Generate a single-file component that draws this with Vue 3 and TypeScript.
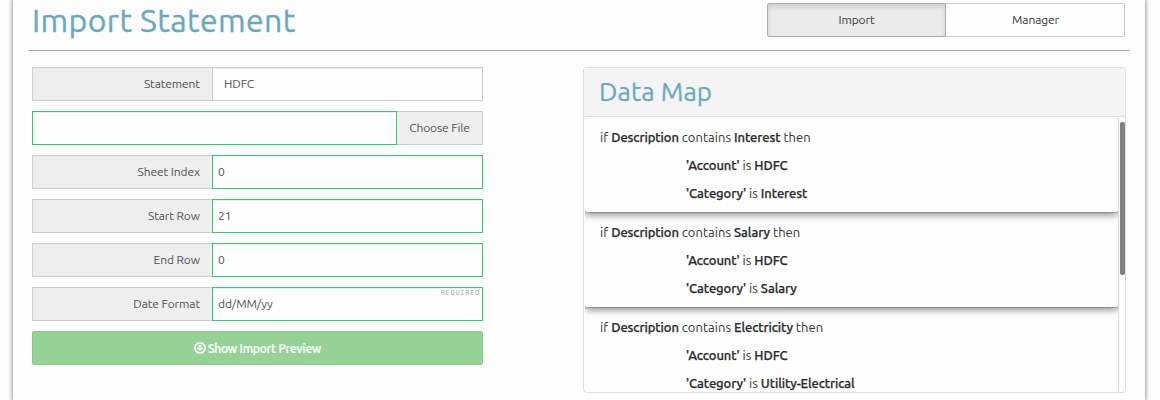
<script setup lang="ts">
interface Rule {
  value: string
  account: string
  category: string
}

const fields = [
  { label: 'Sheet Index', value: '0', required: false },
  { label: 'Start Row', value: '21', required: false },
  { label: 'End Row', value: '0', required: false },
  { label: 'Date Format', value: 'dd/MM/yy', required: true },
]

const rules: Rule[] = [
  { value: 'Interest', account: 'HDFC', category: 'Interest' },
  { value: 'Salary', account: 'HDFC', category: 'Salary' },
  { value: 'Electricity', account: 'HDFC', category: 'Utility-Electrical' },
]
</script>

<template>
  <main class="page">
    <header class="head">
      <h1>Import Statement</h1>
      <nav class="tabs">
        <button class="tab active">Import</button>
        <button class="tab">Manager</button>
      </nav>
    </header>
    <div class="columns">
      <form class="form" @submit.prevent>
        <div class="row">
          <span class="addon label">Statement</span>
          <span class="control plain">HDFC</span>
        </div>
        <div class="row">
          <span class="control valid"></span>
          <span class="addon choose">Choose File</span>
        </div>
        <div v-for="f in fields" :key="f.label" class="row">
          <span class="addon label">{{ f.label }}</span>
          <span class="control valid">
            <span>{{ f.value }}</span>
            <span v-if="f.required" class="required">REQUIRED</span>
          </span>
        </div>
        <button class="submit">
          <svg width="12" height="12" viewBox="0 0 12 12">
            <circle cx="6" cy="6" r="5.1" fill="none" stroke="#fff" stroke-width="1.8" />
            <path d="M4.8 2.7h2.4v3h2.1L6 9.2 2.7 5.7h2.1z" fill="#fff" />
          </svg>
          <span>Show Import Preview</span>
        </button>
      </form>
      <section class="panel">
        <h2>Data Map</h2>
        <div class="body">
          <div class="list">
            <article v-for="r in rules" :key="r.value" class="card">
              <p>if <b>Description</b> contains <b>{{ r.value }}</b> then</p>
              <p class="sub"><b>'Account'</b> is <b>{{ r.account }}</b></p>
              <p class="sub"><b>'Category'</b> is <b>{{ r.category }}</b></p>
            </article>
          </div>
          <div class="track"><div class="thumb"></div></div>
        </div>
      </section>
    </div>
  </main>
</template>

<style>
body {
  background: #fdfdfd;
}
</style>

<style scoped>
* {
  box-sizing: border-box;
}
.page {
  width: 1132px;
  height: 400px;
  margin-left: 13px;
  padding: 0 15px;
  background: #fdfdfd;
  box-shadow: 0 0 4px 1px #999;
  clip-path: inset(0 -10px);
  font-family: Ubuntu, "Noto Sans", sans-serif;
  font-size: 12px;
  letter-spacing: -0.1px;
  color: #505050;
}
.head {
  height: 51px;
  display: flex;
  justify-content: space-between;
  border-bottom: 1px solid #aaa;
  padding: 3px 5px 0 4px;
}
h1,
h2,
p {
  margin: 0;
  font-weight: 400;
}
h1 {
  font-size: 32px;
  line-height: 34px;
  letter-spacing: 0.4px;
  color: #69a9c0;
  -webkit-text-stroke: 0.35px #69a9c0;
  white-space: nowrap;
}
.tabs {
  display: flex;
}
button {
  font: inherit;
  letter-spacing: inherit;
  padding: 0;
}
.tab {
  width: 179px;
  height: 34px;
  padding-bottom: 1px;
  padding-left: 1px;
  border: 1px solid #ccc;
  border-left: 0;
  border-radius: 0 2px 2px 0;
  background: #fefefe;
  color: #333;
}
.tab.active {
  padding-left: 0;
  border: 1px solid #adadad;
  border-radius: 2px 0 0 2px;
  background: #ebebeb;
  box-shadow: inset 0 3px 5px rgba(0, 0, 0, 0.125);
}
.columns {
  display: flex;
  justify-content: space-between;
  padding: 16px 4px 0;
}
.form {
  width: 451px;
  display: flex;
  flex-direction: column;
  gap: 10px;
}
.row {
  display: flex;
  height: 34px;
}
.addon {
  background: #eee;
  border: 1px solid #ccc;
  line-height: 32px;
}
.label {
  width: 180px;
  border-right: 0;
  padding-right: 12px;
  text-align: right;
}
.choose {
  width: 86px;
  border-left: 0;
  text-align: center;
}
.control {
  flex: 1;
  position: relative;
  border: 1px solid #ccc;
  padding-left: 5px;
  line-height: 32px;
  background: #fefefe;
  box-shadow: inset 0 1px 1px rgba(0, 0, 0, 0.075);
}
.plain {
  padding-left: 11px;
}
.valid {
  border-color: #2ecc71;
}
.required {
  position: absolute;
  top: 1px;
  right: 2px;
  font: 7px/9px "DejaVu Sans Mono", monospace;
  letter-spacing: 0.7px;
  color: #aaa;
}
.submit {
  height: 34px;
  display: flex;
  align-items: center;
  justify-content: center;
  gap: 2px;
  border: 1px solid #89cb89;
  border-radius: 2px;
  background: #96d296;
  color: #fff;
  font-weight: 500;
  letter-spacing: -0.2px;
  -webkit-text-stroke: 0.2px #fff;
}
.panel {
  width: 543px;
  height: 326px;
  border: 1px solid #ddd;
  border-radius: 4px;
  overflow: hidden;
}
h2 {
  height: 49px;
  padding-left: 15px;
  background: #f4f4f4;
  border-bottom: 1px solid #ddd;
  font-size: 26px;
  line-height: 48px;
  letter-spacing: 0.1px;
  color: #69a9c0;
  -webkit-text-stroke: 0.25px #69a9c0;
}
.body {
  display: flex;
  height: 275px;
  padding: 1px 0 0 1px;
}
.list {
  width: 534px;
  height: 274px;
  overflow: hidden;
  border-right: 1px solid #ddd;
}
.card {
  position: relative;
  height: 94px;
  margin-bottom: 1px;
  padding: 5px 0 0 15px;
  border-radius: 3px;
  background: #fefefe;
  box-shadow: 0 2px 8px rgba(0, 0, 0, 0.55);
  font-size: 13px;
  line-height: 28px;
  letter-spacing: 0.03px;
  color: #333;
}
.card:nth-child(1) {
  z-index: 3;
}
.card:nth-child(2) {
  z-index: 2;
}
.card:nth-child(3) {
  z-index: 1;
}
.card b {
  font-weight: 500;
  letter-spacing: -0.1px;
  color: #2b2b2b;
  -webkit-text-stroke: 0.25px #2b2b2b;
}
.sub {
  padding-left: 86px;
}
.track {
  width: 5px;
  height: 265px;
  margin: 4px 0 0 1px;
  border-radius: 3px;
  background: #fff;
  box-shadow: 0 0 1px #ccc;
}
.thumb {
  height: 153px;
  border-radius: 2px;
  background: #808080;
}
</style>
